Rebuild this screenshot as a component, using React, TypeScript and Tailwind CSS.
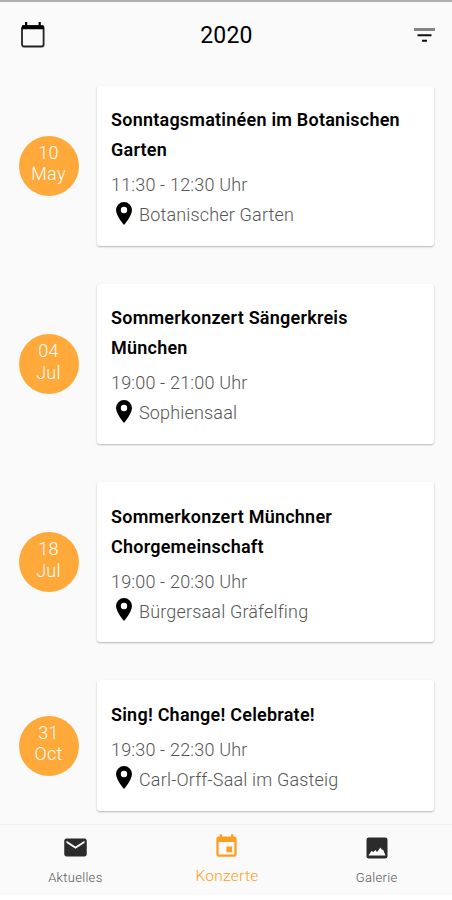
import React from "react";
import { MdEvent, MdMail } from "react-icons/md";

const concerts = [
  {
    id: 1,
    day: "10",
    month: "May",
    title: ["Sonntagsmatinéen im Botanischen", "Garten"],
    time: "11:30 - 12:30 Uhr",
    place: "Botanischer Garten",
  },
  {
    id: 2,
    day: "04",
    month: "Jul",
    title: ["Sommerkonzert Sängerkreis", "München"],
    time: "19:00 - 21:00 Uhr",
    place: "Sophiensaal",
  },
  {
    id: 3,
    day: "18",
    month: "Jul",
    title: ["Sommerkonzert Münchner", "Chorgemeinschaft"],
    time: "19:00 - 20:30 Uhr",
    place: "Bürgersaal Gräfelfing",
  },
  {
    id: 4,
    day: "31",
    month: "Oct",
    title: ["Sing! Change! Celebrate!"],
    time: "19:30 - 22:30 Uhr",
    place: "Carl-Orff-Saal im Gasteig",
  },
];

const CalendarIcon = () => (
  <svg width="24" height="26" viewBox="0 0 24 26" fill="none">
    <rect x="1" y="4.2" width="21.6" height="20.3" rx="2" stroke="#222" strokeWidth="1.8" />
    <path d="M1 3.2h21.6v4H1zM4 0h2.2v4H4zM17.6 0h2.2v4h-2.2z" fill="#000" />
  </svg>
);

const FilterIcon = () => (
  <svg width="21" height="15" viewBox="0 0 21 15">
    <path d="M0 0h21v3H0z" fill="#858585" />
    <path d="M3.5 6.3h14v2h-14zM8 11.7h5v2H8z" fill="#111" />
  </svg>
);

const PinIcon = () => (
  <svg width="17" height="23" viewBox="0 0 17 23" className="ml-[5px] mr-[6px] -translate-y-[2px]">
    <path
      fillRule="evenodd"
      d="M8 0A8 8 0 0 0 0 8.1C0 14 8 23 8 23s8-9 8-14.9A8 8 0 0 0 8 0zm0 11.2a3.2 3.2 0 1 1 0-6.4 3.2 3.2 0 0 1 0 6.4z"
      fill="#000"
    />
  </svg>
);

const GalleryIcon = () => (
  <svg width="22" height="22" viewBox="0 0 22 22">
    <rect x="0.5" y="0.5" width="21" height="21" rx="2.2" fill="#2b2b2b" />
    <path d="M2.5 18.5l3-4.5 2 1 1.8-2 1.7 2 3.5-4.5 1.5 2.5 1-.5 2.5 6z" fill="#fff" />
  </svg>
);

const App = () => {
  return (
    <div className="flex h-[900px] w-[452px] flex-col overflow-hidden bg-[#fafafa] font-[Roboto,sans-serif] text-black">
      <div className="h-[2px] shrink-0 bg-[#b0b0b0]" />
      <header className="flex h-[66px] shrink-0 items-center justify-between pl-[21px] pr-[17px]">
        <CalendarIcon />
        <h1 className="mr-[6px] pt-[2px] text-[23px] tracking-[0.2px]">2020</h1>
        <FilterIcon />
      </header>

      <main className="flex h-[756px] shrink-0 flex-col gap-[37.9px] pt-[17.8px]">
        {concerts.map((concert) => (
          <div key={concert.id} className="flex items-center pl-[19px] pr-[18px]">
            <div className="flex size-[60px] shrink-0 flex-col items-center rounded-full bg-[#ffa93a] pr-[1px] pt-[6px] text-[18px] font-light leading-[21.5px] tracking-[0.3px] text-white">
              <span>{concert.day}</span>
              <span>{concert.month}</span>
            </div>
            <div className="ml-[18px] grow rounded-[3px] bg-white pb-[15.8px] pl-[14px] pt-[19.5px] shadow-[0_1px_2px_rgba(0,0,0,0.28)]">
              <h2 className="text-[18px] font-semibold leading-[30px] tracking-[0.23px]">
                {concert.title.map((line) => (
                  <span key={line} className="block whitespace-nowrap">
                    {line}
                  </span>
                ))}
              </h2>
              <p className="mt-[5px] text-[18px] font-light leading-[30px] tracking-[0.17px] text-[#555]">
                {concert.time}
              </p>
              <p className="flex items-center text-[18px] font-light leading-[30px] tracking-[0.17px] text-[#555]">
                <PinIcon />
                {concert.place}
              </p>
            </div>
          </div>
        ))}
      </main>

      <nav className="grid h-[71px] shrink-0 grid-cols-3 border-t border-[#eeeeee]">
        <div className="flex flex-col items-center pt-[9px]">
          <MdMail className="size-[27px] text-[#2b2b2b]" />
          <span className="mt-[8px] text-[13px] font-light leading-[18px] tracking-[0.3px] text-[#555]">
            Aktuelles
          </span>
        </div>
        <div className="flex flex-col items-center pl-[2px] pt-[8px]">
          <MdEvent className="size-[27px] text-[#ff9d1c]" />
          <span className="mt-[7px] text-[15.5px] font-light leading-[18px] tracking-[0.3px] text-[#ff9d1c]">
            Konzerte
          </span>
        </div>
        <div className="flex flex-col items-center pt-[12px]">
          <GalleryIcon />
          <span className="mt-[10px] text-[13px] font-light leading-[18px] tracking-[0.3px] text-[#555]">
            Galerie
          </span>
        </div>
      </nav>
      <div className="grow bg-white" />
    </div>
  );
};

export default App;
